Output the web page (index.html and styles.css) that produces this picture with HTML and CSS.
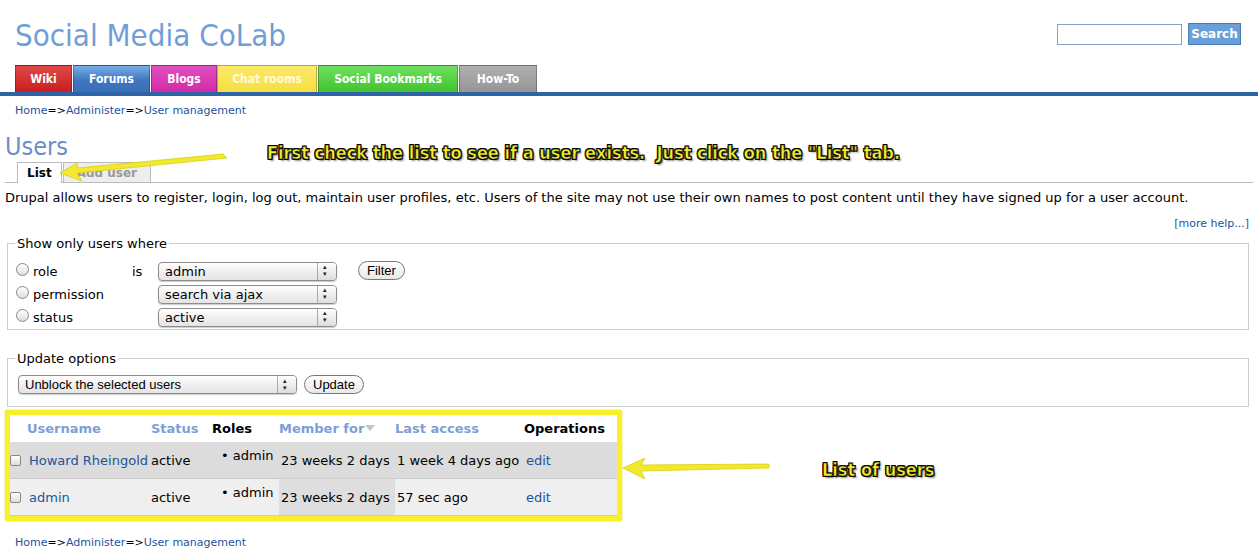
FILE: index.html
```html
<!DOCTYPE html>
<html>
<head>
<meta charset="utf-8">
<link rel="stylesheet" href="styles.css">
</head>
<body>
<div class="page">
  <header class="header">
    <div class="site-name">Social Media CoLab</div>
    <form class="search">
      <input class="search-input" type="text">
      <span class="search-btn">Search</span>
    </form>
  </header>
  <nav class="nav">
    <span class="tab t-wiki">Wiki</span>
    <span class="tab t-forums">Forums</span>
    <span class="tab t-blogs">Blogs</span>
    <span class="tab t-chat">Chat rooms</span>
    <span class="tab t-social">Social Bookmarks</span>
    <span class="tab t-howto">How-To</span>
  </nav>
  <div class="navbar-line"></div>

  <div class="breadcrumb"><a>Home</a>=&gt;<a>Administer</a>=&gt;<a>User management</a></div>

  <main class="content">
    <h1 class="title">Users</h1>
    <div class="tabs">
      <span class="tabs-item active">List</span>
      <span class="tabs-item">Add user</span>
    </div>
    <p class="intro">Drupal allows users to register, login, log out, maintain user profiles, etc. Users of the site may not use their own names to post content until they have signed up for a user account.</p>
    <div class="more-help"><a>[more help...]</a></div>

    <fieldset class="fs fs-filter">
      <legend>Show only users where</legend>
      <div class="filter-grid">
        <div class="f-rows">
          <div class="f-row"><span class="radio"></span><span class="f-label">role</span><span class="f-is">is</span><span class="select w-filter">admin</span></div>
          <div class="f-row"><span class="radio"></span><span class="f-label">permission</span><span class="f-is"></span><span class="select w-filter">search via ajax</span></div>
          <div class="f-row"><span class="radio"></span><span class="f-label">status</span><span class="f-is"></span><span class="select w-filter">active</span></div>
        </div>
        <span class="btn">Filter</span>
      </div>
    </fieldset>

    <fieldset class="fs fs-update">
      <legend>Update options</legend>
      <div class="u-row">
        <span class="select w-update small">Unblock the selected users</span>
        <span class="btn">Update</span>
      </div>
    </fieldset>

    <div class="highlight">
      <table class="users">
        <colgroup>
          <col class="w-check"><col class="w-user"><col class="w-status"><col class="w-roles"><col class="w-member"><col class="w-last"><col class="w-ops">
        </colgroup>
        <thead>
          <tr>
            <th></th>
            <th class="sort">Username</th>
            <th class="sort">Status</th>
            <th class="plain">Roles</th>
            <th class="sort">Member for<span class="arrow-down"></span></th>
            <th class="sort">Last access</th>
            <th class="plain">Operations</th>
          </tr>
        </thead>
        <tbody>
          <tr class="odd">
            <td class="c-check"><span class="cb"></span></td>
            <td class="c-user"><a>Howard Rheingold</a></td>
            <td class="c-status">active</td>
            <td class="roles"><span class="bullet">•</span> admin</td>
            <td class="active-col">23 weeks 2 days</td>
            <td>1 week 4 days ago</td>
            <td class="ops"><a>edit</a></td>
          </tr>
          <tr class="even">
            <td class="c-check"><span class="cb"></span></td>
            <td class="c-user"><a>admin</a></td>
            <td class="c-status">active</td>
            <td class="roles"><span class="bullet">•</span> admin</td>
            <td class="active-col">23 weeks 2 days</td>
            <td>57 sec ago</td>
            <td class="ops"><a>edit</a></td>
          </tr>
        </tbody>
      </table>
    </div>
  </main>

  <div class="breadcrumb bottom"><a>Home</a>=&gt;<a>Administer</a>=&gt;<a>User management</a></div>

  <div class="note note-1">First check the list to see if a user exists.&nbsp; Just click on the "List" tab.</div>
  <div class="note note-2">List of users</div>

  <svg class="arrow arrow-1" width="180" height="40" viewBox="0 0 180 40">
    <polygon points="168,4 172,8 22,23 27,31 5,23 22,13 23,18" fill="#f2e92c" stroke="#d8cf10" stroke-width="0.8"/>
  </svg>
  <svg class="arrow arrow-2" width="160" height="30" viewBox="0 0 160 30">
    <polygon points="150,9 150,13 22,16 26,24 4,13 26,3 22,10" fill="#f2e92c" stroke="#d8cf10" stroke-width="0.8"/>
  </svg>
</div>
</body>
</html>
```

FILE: styles.css
```css
html, body {
  margin: 0;
  padding: 0;
  background: #fff;
}
body {
  font-family: "DejaVu Sans", Verdana, sans-serif;
  color: #000;
  width: 1258px;
  height: 552px;
  overflow: hidden;
}
a { color: #22539a; text-decoration: none; }
.page { position: relative; width: 1258px; height: 552px; }

.header {
  display: flex;
  justify-content: space-between;
  align-items: flex-start;
  height: 65px;
}
.site-name {
  font-family: "DejaVu Sans Condensed", "DejaVu Sans", sans-serif;
  font-size: 31px;
  color: #6f9fd8;
  margin: 16px 0 0 15px;
  line-height: 38px;
}
.search {
  display: flex;
  align-items: center;
  gap: 6px;
  margin: 23px 17px 0 0;
}
.search-input {
  box-sizing: border-box;
  width: 125px;
  height: 21px;
  border: 1px solid #7fa3cc;
  margin: 0;
  padding: 0;
}
.search-btn {
  box-sizing: border-box;
  height: 22px;
  width: 53px;
  background: #6a9fda;
  border: 1px solid #4a7db8;
  color: #fff;
  font-weight: bold;
  font-size: 12px;
  line-height: 20px;
  text-align: center;
}

.nav {
  display: flex;
  padding-left: 15px;
  height: 27px;
}
.tab {
  box-sizing: border-box;
  height: 27px;
  font-family: "DejaVu Sans Condensed", "DejaVu Sans", sans-serif;
  font-weight: bold;
  font-size: 12px;
  color: #fff;
  line-height: 26px;
  text-align: center;
  border: 1px solid rgba(0,0,0,0.25);
  border-bottom: none;
}
.t-wiki { width: 57px; background: linear-gradient(#e04848, #c81f1f); }
.t-forums { width: 77px; margin-left: 1px; background: linear-gradient(#78aee8, #3f76c0 55%, #3a6fb6); }
.t-blogs { width: 66px; margin-left: 1px; background: linear-gradient(#e050c0, #d42aa6); }
.t-chat { width: 100px; background: linear-gradient(#fbe96a, #f6df40); color: #fffbe0; }
.t-social { width: 140px; margin-left: 1px; background: linear-gradient(#6ee060, #42c32e); }
.t-howto { width: 78px; margin-left: 1px; background: linear-gradient(#b0b0b0, #959595); }

.navbar-line {
  height: 4px;
  background: #2e63a8;
}

.breadcrumb {
  font-size: 11px;
  color: #000;
  padding: 8px 0 0 15px;
  height: 19px;
}
.breadcrumb.bottom {
  padding-top: 0;
  height: auto;
  margin-top: 15px;
}

.content { padding: 0 5px 0 5px; }
.title {
  margin: 9px 0 0 0;
  font-family: "DejaVu Sans Condensed", "DejaVu Sans", sans-serif;
  font-weight: normal;
  font-size: 25px;
  color: #6a8fc8;
  line-height: 30px;
  height: 30px;
}
.tabs {
  display: flex;
  padding-left: 12px;
  border-bottom: 1px solid #bbb;
  height: 20px;
}
.tabs-item {
  box-sizing: border-box;
  font-size: 12px;
  font-weight: bold;
  line-height: 18px;
  height: 20px;
  padding: 1px 13px 0;
  border: 1px solid #bbb;
  border-bottom: none;
  background: #eee;
  color: #999;
  margin-right: 1px;
}
.tabs-item.active {
  background: #fff;
  color: #000;
  height: 21px;
  padding: 1px 9px 0;
}
.intro {
  font-size: 13px;
  margin: 7px 0 0 0;
  line-height: 16px;
}
.more-help {
  text-align: right;
  font-size: 11px;
  margin-top: 11px;
  padding-right: 4px;
  line-height: 14px;
}

.fs {
  border: 1px solid #ccc;
  margin: 0 4px 0 2px;
  padding: 0 10px;
}
.fs legend {
  font-size: 13px;
  padding: 0 2px;
  margin-left: -3px;
}
.fs-filter { margin-top: 5px; padding-bottom: 3px; }
.filter-grid { display: flex; align-items: flex-start; padding-top: 11px; }
.f-rows { display: flex; flex-direction: column; gap: 5px; }
.f-row { display: flex; align-items: center; height: 18px; font-size: 13px; }
.radio {
  box-sizing: border-box;
  width: 13px; height: 13px;
  border-radius: 50%;
  border: 1px solid #888;
  background: linear-gradient(#fff, #ddd);
  margin: -4px 4px 0 -2px;
}
.f-label { width: 99px; }
.f-is { width: 26px; }
.select {
  box-sizing: border-box;
  position: relative;
  height: 19px;
  border: 1px solid #8c8c8c;
  border-radius: 4px;
  background: linear-gradient(#fff, #f0f0f0 50%, #e4e4e4);
  font-size: 13px;
  line-height: 17px;
  padding-left: 6px;
  box-shadow: 0 1px 1px rgba(0,0,0,0.2);
}
.select::after {
  content: "";
  position: absolute;
  right: 0; top: 0; bottom: 0;
  width: 18px;
  border-left: 1px solid #aaa;
  background: linear-gradient(#fff, #ddd);
  border-radius: 0 3px 3px 0;
}
.select::before {
  content: "▴\A▾";
  white-space: pre;
  position: absolute;
  right: 5px; top: 1px;
  width: 8px;
  font-size: 7px;
  line-height: 7px;
  z-index: 1;
  color: #222;
}
.w-filter { width: 179px; }
.w-update { width: 279px; }
.select.small { font-family: "Liberation Sans", Arial, sans-serif; font-size: 13px; }
.btn {
  box-sizing: border-box;
  height: 19px;
  border: 1px solid #777;
  border-radius: 10px;
  background: linear-gradient(#fff, #e8e8e8);
  font-family: "Liberation Sans", Arial, sans-serif;
  font-size: 13px;
  line-height: 17px;
  padding: 0 8px;
  margin-left: 21px;
  margin-top: -1px;
}
.fs-update { margin-top: 21px; padding-bottom: 12px; }
.u-row { display: flex; align-items: center; padding-top: 9px; }
.u-row .btn { margin-left: 7px; margin-top: 0; }

.highlight {
  margin-top: 3px;
  width: 607px;
  border: 5px solid #f8f02a;
  border-radius: 2px;
  box-shadow: 0 0 2px #e0d818;
  background: #fff;
}
.users {
  border-collapse: collapse;
  table-layout: fixed;
  font-size: 13px;
  width: 607px;
}
.w-check { width: 17px; }
.w-user { width: 124px; }
.w-status { width: 61px; }
.w-roles { width: 67px; }
.w-member { width: 116px; }
.w-last { width: 129px; }
.w-ops { width: 93px; }
.users th {
  text-align: left;
  font-weight: bold;
  height: 27px;
  padding: 0;
  white-space: nowrap;
}
.users th.sort { color: #7d9fd8; }
.users th.plain { color: #000; }
.users td {
  height: 36px;
  padding: 0 0 0 2px;
  white-space: nowrap;
  border-bottom: 1px solid #ccc;
}
.users td.c-status { padding-left: 0; }
.users tr.odd td { background: #dcdcdc; }
.users tr.even td { background: #efefef; }
.users tr.even td.active-col { background: #dedede; }
.users td.c-check { padding: 0; }
.cb {
  display: inline-block;
  box-sizing: border-box;
  width: 11px; height: 11px;
  border: 1px solid #888;
  border-radius: 2px;
  background: linear-gradient(#fff, #ddd);
  vertical-align: -1px;
}
.users td.roles { vertical-align: top; padding: 6px 0 0 9px; height: 30px; }
.arrow-down {
  display: inline-block;
  width: 0; height: 0;
  border-left: 5px solid transparent;
  border-right: 5px solid transparent;
  border-top: 6px solid #c4c4c4;
  margin-left: 1px;
  vertical-align: 2px;
}

.note {
  position: absolute;
  font-family: "DejaVu Sans Condensed", "DejaVu Sans", sans-serif;
  font-weight: bold;
  font-size: 18px;
  color: #f6f02a;
  -webkit-text-stroke: 0.6px #222;
  text-shadow: 1px 1px 0 #000, -1px -1px 0 #000, 1px -1px 0 #000, -1px 1px 0 #000, 2px 2px 2px rgba(0,0,0,0.5);
  white-space: nowrap;
}
.note-1 { left: 267px; top: 142px; }
.note-2 { left: 822px; top: 459px; }
.arrow { position: absolute; }
.arrow-1 { left: 55px; top: 150px; }
.arrow-2 { left: 619px; top: 455px; }
```
